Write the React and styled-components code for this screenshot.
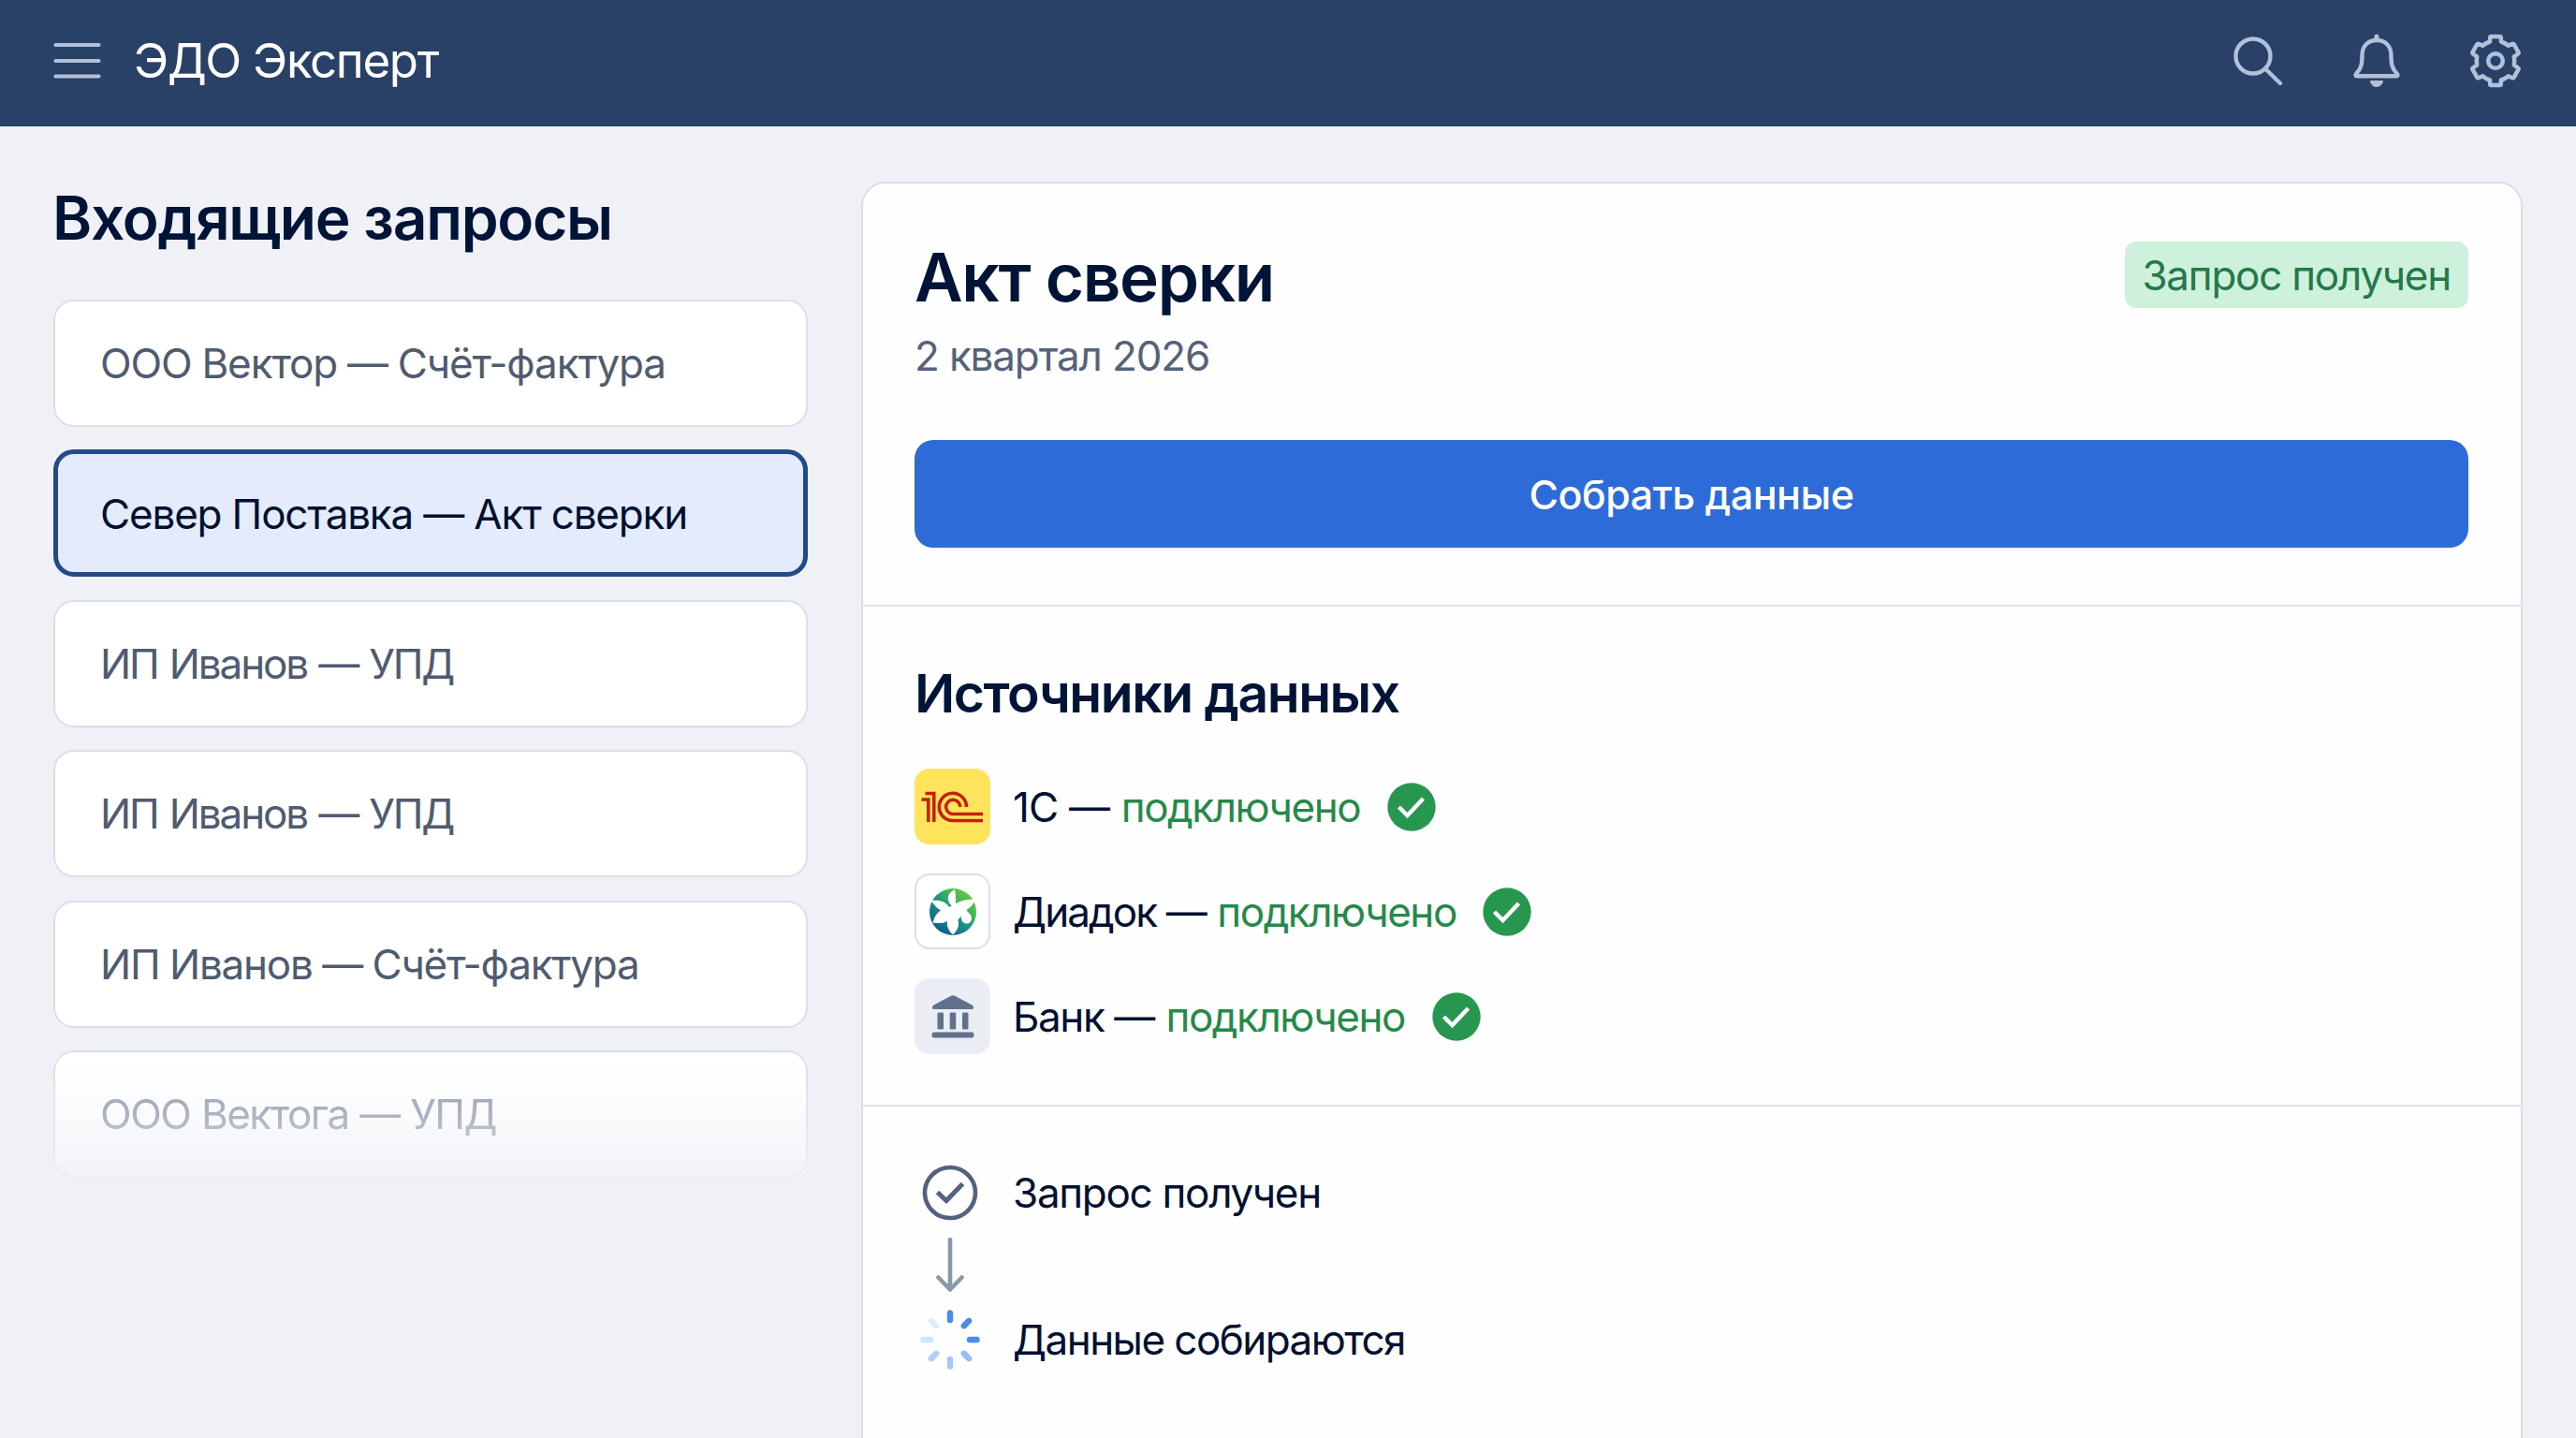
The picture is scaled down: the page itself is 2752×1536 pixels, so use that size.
import React from "react";
import styled, { createGlobalStyle, css } from "styled-components";

const Global = createGlobalStyle`
  *, *::before, *::after { box-sizing: border-box; }
  body {
    margin: 0;
    background: #eff1f6;
    font-family: Inter, "Liberation Sans", sans-serif;
    color: #001030;
  }
  h1, h2, h3, p, ul, ol { margin: 0; padding: 0; font-weight: inherit; }
  ul, ol { list-style: none; }
  button { font: inherit; border: 0; padding: 0; background: none; color: inherit; }
  svg { display: block; flex: none; }
`;

const Page = styled.div`
  display: flex;
  flex-direction: column;
  height: 1536px;
  overflow: hidden;
`;

const Header = styled.header`
  display: flex;
  align-items: center;
  justify-content: space-between;
  height: 135px;
  flex: none;
  padding: 0 58px 6px 57px;
  background: #294067;
  color: #b1c1dc;
`;

const Brand = styled.div`
  display: flex;
  align-items: center;
  gap: 35px;
`;

const BrandName = styled.span`
  font-size: 51px;
  line-height: 60px;
  letter-spacing: -1.35px;
  color: #ffffff;
`;

const HeaderActions = styled.div`
  display: flex;
  align-items: center;
  gap: 74.5px;
`;

const IconButton = styled.button`
  display: flex;
`;

const Body = styled.div`
  display: flex;
  flex: 1;
  min-height: 0;
  padding: 0 57px;
  gap: 57px;
`;

const Sidebar = styled.aside`
  display: flex;
  flex-direction: column;
  width: 806px;
  flex: none;
  padding-top: 58px;
`;

const SidebarTitle = styled.h2`
  font-size: 64px;
  font-weight: 600;
  line-height: 80px;
  letter-spacing: -1.25px;
  margin-left: -1px;
  color: #001438;
`;

const RequestList = styled.ul`
  display: flex;
  flex-direction: column;
  gap: 24.4px;
  margin-top: 47px;
`;

const RequestItem = styled.li`
  display: flex;
  align-items: center;
  height: 136px;
  padding: 0 48px;
  border: 2px solid #dadfe8;
  border-radius: 22px;
  background: #ffffff;
  font-size: 44px;
  line-height: 56px;
  letter-spacing: ${(p) => p.$track}px;
  word-spacing: ${(p) => p.$word || 0}px;
  color: #4f5b70;
  ${(p) =>
    p.$state === "active" &&
    css`
      padding: 2px 45px 0;
      border: 5px solid #234a88;
      background: #e4ebfc;
      color: #001030;
    `}
  ${(p) =>
    p.$state === "faded" &&
    css`
      color: #8f99aa;
      -webkit-mask-image: linear-gradient(#000, rgba(0, 0, 0, 0.7) 50%, rgba(0, 0, 0, 0.15));
      mask-image: linear-gradient(#000, rgba(0, 0, 0, 0.7) 50%, rgba(0, 0, 0, 0.15));
    `}
`;

const Panel = styled.main`
  display: flex;
  flex-direction: column;
  flex: 1;
  margin-top: 59px;
  border: 2px solid #dadee7;
  border-bottom: 0;
  border-radius: 26px 26px 0 0;
  background: #fefefe;
`;

const Section = styled.section`
  display: flex;
  flex-direction: column;
  padding: ${(p) => p.$pad};
  border-bottom: ${(p) => (p.$last ? "0" : "2px solid #dde1e8")};
`;

const TitleRow = styled.div`
  display: flex;
  justify-content: space-between;
  align-items: flex-start;
`;

const DocTitle = styled.h1`
  font-size: 71px;
  font-weight: 600;
  line-height: 84px;
  letter-spacing: -1.35px;
  margin-top: -4px;
  color: #001438;
`;

const Period = styled.p`
  font-size: 44px;
  line-height: 56px;
  letter-spacing: -1.15px;
  margin-top: 14px;
  color: #56627a;
`;

const Badge = styled.span`
  display: flex;
  align-items: center;
  height: 71px;
  padding: 0 19px 0 18px;
  border-radius: 12px;
  background: #cef1dc;
  color: #25784a;
  font-size: 44px;
  line-height: 56px;
  letter-spacing: -1.25px;
`;

const PrimaryButton = styled.button`
  height: 115px;
  margin-top: 62px;
  border-radius: 20px;
  background: #2c6bd8;
  color: #ffffff;
  font-size: 43px;
  font-weight: 500;
  line-height: 56px;
  letter-spacing: -0.45px;
  text-align: center;
`;

const SectionTitle = styled.h3`
  font-size: 57px;
  font-weight: 600;
  line-height: 70px;
  letter-spacing: -1.45px;
  color: #001438;
`;

const SourceList = styled.ul`
  display: flex;
  flex-direction: column;
  gap: 31px;
  margin-top: 45px;
`;

const SourceRow = styled.li`
  display: flex;
  align-items: center;
  height: 81px;
  font-size: 44px;
  line-height: 56px;
`;

const Tile = styled.span`
  display: flex;
  align-items: center;
  justify-content: center;
  width: 81px;
  height: 81px;
  margin-right: 24px;
  border-radius: 16px;
  background: ${(p) => p.$bg};
  border: ${(p) => p.$border || "0"};
`;

const SourceName = styled.span`
  letter-spacing: ${(p) => p.$track}px;
`;

const Connected = styled.span`
  color: #25894a;
  letter-spacing: -1.45px;
  margin-left: 12.5px;
  margin-right: 28.5px;
`;

const StepList = styled.ol`
  display: flex;
  flex-direction: column;
`;

const StepRow = styled.li`
  display: flex;
  align-items: center;
  gap: 29px;
  height: ${(p) => p.$h}px;
  font-size: 44px;
  line-height: 56px;
  letter-spacing: ${(p) => p.$track || 0}px;
`;

const StepMark = styled.span`
  display: flex;
  justify-content: center;
  width: 76px;
`;

const MenuIcon = () => (
  <svg width="51" height="40" viewBox="0 0 51 40" stroke="currentColor" strokeWidth="4.200" strokeLinecap="round">
    <path d="M2.500 3H48.500M2.500 20H48.500M2.500 36.500H48.500" />
  </svg>
);

const SearchIcon = () => (
  <svg width="54" height="54" viewBox="0 0 54 54" fill="none" stroke="currentColor" strokeWidth="4.400" strokeLinecap="round">
    <circle cx="22" cy="22" r="18.500" />
    <path d="M35.700 36L51 51" />
  </svg>
);

const BellIcon = () => (
  <svg width="50" height="58" viewBox="0 0 50 58" fill="none" stroke="currentColor" strokeWidth="4.400" strokeLinecap="round" strokeLinejoin="round">
    <path d="M25 3V6" strokeWidth="5" />
    <path d="M25 7C15 7 9.500 14 9.500 23C9.500 34 8 37.500 3.300 42.500C2 44.300 2.400 45.200 4 45.200H46C47.600 45.200 48 44.300 46.700 42.500C42 37.500 40.500 34 40.500 23C40.500 14 35 7 25 7Z" />
    <path d="M19.300 50H30.700C32 50 32.300 51 31.700 52C30.500 55 28 57 25 57C22 57 19.500 55 18.300 52C17.700 51 18 50 19.300 50Z" fill="currentColor" stroke="none" />
  </svg>
);

const GearIcon = () => (
  <svg width="56" height="58" viewBox="-28 -29 56 58" fill="none" stroke="currentColor" strokeWidth="4.500" strokeLinejoin="round">
    <circle r="7.800" />
    <path d="M-4.500 -26H4.500Q5.700 -26 5.800 -24.800L6 -20.500Q10.500 -19 13.800 -16.200L18 -18.200Q19.100 -18.600 19.700 -17.600L24.500 -9.200Q25 -8.200 24 -7.500L19.800 -4.400Q20.700 0 19.800 4.400L24 7.500Q25 8.200 24.500 9.200L19.700 17.600Q19.100 18.600 18 18.200L13.800 16.200Q10.500 19 6 20.500L5.800 24.800Q5.700 26 4.500 26H-4.500Q-5.700 26 -5.800 24.800L-6 20.500Q-10.500 19 -13.800 16.200L-18 18.200Q-19.100 18.600 -19.700 17.600L-24.500 9.200Q-25 8.200 -24 7.500L-19.800 4.400Q-20.700 0 -19.800 -4.400L-24 -7.500Q-25 -8.200 -24.500 -9.200L-19.700 -17.600Q-19.100 -18.600 -18 -18.200L-13.800 -16.200Q-10.500 -19 -6 -20.500L-5.800 -24.800Q-5.700 -26 -4.500 -26Z" />
  </svg>
);

const OneCLogo = () => (
  <svg width="81" height="81" viewBox="0 0 81 81" fill="none" stroke="#c41e0c" strokeWidth="3.500">
    <path d="M11.500 26.500H20.800V57M7.500 33H14.800V57" />
    <path d="M55.500 41A14.600 14.600 0 1 0 42 55.500H73" />
    <path d="M48.800 41A7.600 7.600 0 1 0 42 48.500H73" />
  </svg>
);

const DiadocLogo = () => (
  <svg width="50" height="50" viewBox="-25 -25 50 50">
    <defs>
      <linearGradient id="globe" x1="0.850" y1="0.100" x2="0.200" y2="0.850">
        <stop offset="0" stopColor="#66cc3e" />
        <stop offset="0.300" stopColor="#41b455" />
        <stop offset="0.550" stopColor="#1c9484" />
        <stop offset="1" stopColor="#0e6590" />
      </linearGradient>
    </defs>
    <circle r="25" fill="url(#globe)" />
    <path
      fill="#ffffff"
      d="M2 -24C-3 -21 -6 -18 -5 -13C-4.500 -10 -3 -8 -1.500 -6.500L-4 -5C-8 -11 -13 -13 -23 -12C-20 -7 -17 -4 -13 -1.500C-18 2 -20 6 -21.500 11.500C-16 12.500 -11 12.500 -6 10C-7 16 -4.500 20 0 24.500C5 20 7 15.500 5.500 8.500L9 4.500C8.500 9 10.500 12 14 12.500C18.500 13 21 8.500 19.500 4.500C18.500 1.500 15.500 0 14.500 -2C19 -4.500 22 -8.500 24 -13C17 -14 10 -13 3 -9C3.500 -14 3 -19 2 -24Z"
    />
  </svg>
);

const BankIcon = () => (
  <svg width="46" height="46" viewBox="0 0 46 46" fill="#62718b">
    <path d="M21.500 0.600Q23 -0.200 24.500 0.600L43.500 10.500Q45 11.500 45 13V13.500Q45 15 43.300 15H2.700Q1 15 1 13.500V13Q1 11.500 2.500 10.500Z" />
    <rect x="6.500" y="18.500" width="6.500" height="18" rx="1.200" />
    <rect x="19.700" y="18.500" width="6.500" height="18" rx="1.200" />
    <rect x="33" y="18.500" width="6.500" height="18" rx="1.200" />
    <rect x="0.500" y="39.500" width="45" height="6" rx="2.500" />
  </svg>
);

const CheckBadge = () => (
  <svg width="52" height="52" viewBox="0 0 52 52" fill="none">
    <circle cx="26" cy="26" r="25.700" fill="#27974f" />
    <path d="M12.500 26L21.500 35L38.500 17" stroke="#ffffff" strokeWidth="4.400" />
  </svg>
);

const CheckOutline = () => (
  <svg width="60" height="60" viewBox="0 0 60 60" fill="none" stroke="#54637d" strokeWidth="4.600">
    <circle cx="30" cy="30" r="27" />
    <path d="M16.500 29.500L26 38.500L43.500 20.500" strokeWidth="5" />
  </svg>
);

const ArrowDown = () => (
  <svg width="34" height="60" viewBox="0 0 34 60" fill="none" stroke="#8a98ac" strokeWidth="4.600" strokeLinecap="round" strokeLinejoin="round">
    <path d="M17 3V55.500M4.500 43.500L17 56.500L29.500 43.500" />
  </svg>
);

const SPOKES = ["#4a8cee", "#4a8cee", "#4a8cee", "#94bcf5", "#a6c7f7", "#b0cef8", "#d3e2fb", "#e0ebfc"];

const Spinner = () => (
  <svg width="66" height="66" viewBox="-33 -33 66 66" strokeWidth="6.400" strokeLinecap="round">
    {SPOKES.map((color, i) => (
      <path key={i} d="M0 -21V-28.500" stroke={color} transform={`rotate(${i * 45})`} />
    ))}
  </svg>
);

const REQUESTS = [
  { text: "ООО Вектор — Счёт-фактура", track: -1.1, word: -0.5 },
  { text: "Север Поставка — Акт сверки", track: -1.17, state: "active" },
  { text: "ИП Иванов — УПД", track: -2.1, word: 1.8 },
  { text: "ИП Иванов — УПД", track: -2.1, word: 1.8 },
  { text: "ИП Иванов — Счёт-фактура", track: -1.22, word: -0.6 },
  { text: "ООО Вектога — УПД", track: -1.5, word: 0.6, state: "faded" },
];

const SOURCES = [
  { name: "1С —", track: -0.8, bg: "#fee35c", Logo: OneCLogo },
  { name: "Диадок —", track: -1.9, bg: "#ffffff", border: "2px solid #dcdfe9", Logo: DiadocLogo },
  { name: "Банк —", track: -1.4, bg: "#ebedf4", Logo: BankIcon },
];

export default function App() {
  return (
    <Page>
      <Global />
      <Header>
        <Brand>
          <IconButton aria-label="Меню"><MenuIcon /></IconButton>
          <BrandName>ЭДО Эксперт</BrandName>
        </Brand>
        <HeaderActions>
          <IconButton aria-label="Поиск"><SearchIcon /></IconButton>
          <IconButton aria-label="Уведомления"><BellIcon /></IconButton>
          <IconButton aria-label="Настройки"><GearIcon /></IconButton>
        </HeaderActions>
      </Header>
      <Body>
        <Sidebar>
          <SidebarTitle>Входящие запросы</SidebarTitle>
          <RequestList>
            {REQUESTS.map((r, i) => (
              <RequestItem key={i} $state={r.state} $track={r.track} $word={r.word}>{r.text}</RequestItem>
            ))}
          </RequestList>
        </Sidebar>
        <Panel>
          <Section $pad="62px 56px 61px 55px">
            <TitleRow>
              <DocTitle>Акт сверки</DocTitle>
              <Badge>Запрос получен</Badge>
            </TitleRow>
            <Period>2 квартал 2026</Period>
            <PrimaryButton>Собрать данные</PrimaryButton>
          </Section>
          <Section $pad="58px 56px 54px 55px">
            <SectionTitle>Источники данных</SectionTitle>
            <SourceList>
              {SOURCES.map(({ name, track, bg, border, Logo }) => (
                <SourceRow key={name}>
                  <Tile $bg={bg} $border={border}><Logo /></Tile>
                  <SourceName $track={track}>{name}</SourceName>
                  <Connected>подключено</Connected>
                  <CheckBadge />
                </SourceRow>
              ))}
            </SourceList>
          </Section>
          <Section $pad="54px 56px 0 55px" $last>
            <StepList>
              <StepRow $h={76} $track={-1.3}><StepMark><CheckOutline /></StepMark>Запрос получен</StepRow>
              <StepRow $h={78}><StepMark><ArrowDown /></StepMark></StepRow>
              <StepRow $h={82} $track={-1.55}><StepMark><Spinner /></StepMark>Данные собираются</StepRow>
            </StepList>
          </Section>
        </Panel>
      </Body>
    </Page>
  );
}
